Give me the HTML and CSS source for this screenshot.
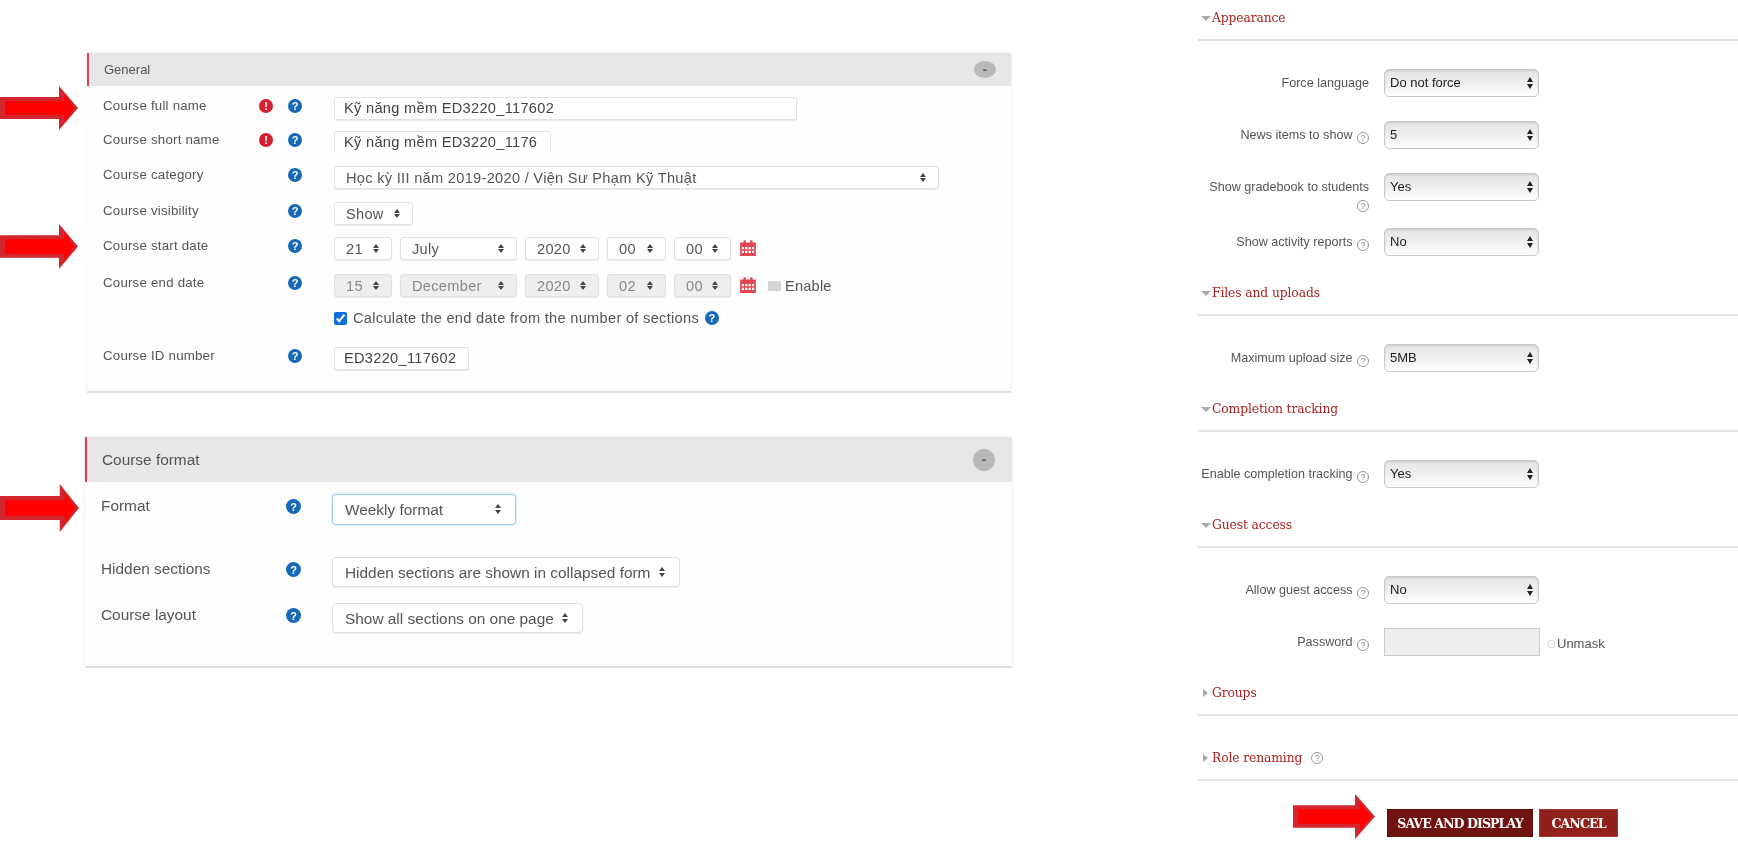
FILE: index.html
```html
<!DOCTYPE html>
<html lang="en">
<head>
<meta charset="utf-8">
<title>Course settings</title>
<link rel="stylesheet" href="styles.css">
</head>
<body>
<svg class="defs" width="0" height="0" aria-hidden="true">
  <symbol id="arrow" viewBox="0 0 78 44" preserveAspectRatio="none">
    <polygon fill="#d2262e" points="0,11 59,11 59,0 78,22 59,44 59,33 0,33"/>
    <polygon fill="#ff0000" points="5,15 64,15 64,8 74,22 64,36 64,29 5,29"/>
  </symbol>
  <symbol id="cal" viewBox="0 0 16 16">
    <path fill="#e2474f" d="M1 3h3V1h2v2h4V1h2v2h3v12H1z"/>
    <path fill="#fff" d="M2.5 7h2v2h-2zM5.500 7h2v2h-2zM8.500 7h2v2h-2zM11.500 7h2v2h-2zM2.500 10.500h2v2h-2zM5.500 10.500h2v2h-2zM8.500 10.500h2v2h-2zM11.500 10.500h2v2h-2z"/>
  </symbol>
</svg>
<main class="page">
  <section class="left">
    <svg class="arrow arrow-a"><use href="#arrow"/></svg>
    <svg class="arrow arrow-b"><use href="#arrow"/></svg>
    <svg class="arrow arrow-c"><use href="#arrow"/></svg>

    <div class="panel panel-general">
      <header class="panel-head"><span>General</span><b class="pill">-</b></header>
      <div class="grid-general">
        <label class="lab">Course full name</label><i class="alert">!</i><i class="help">?</i>
        <div class="ctl"><input class="inp w-fullname" value="Kỹ năng mềm ED3220_117602"></div>

        <label class="lab">Course short name</label><i class="alert">!</i><i class="help">?</i>
        <div class="ctl"><input class="inp w-short open-bottom" value="Kỹ năng mềm ED3220_1176"></div>

        <label class="lab">Course category</label><span></span><i class="help">?</i>
        <div class="ctl"><div class="psel w-cat"><select><option>Học kỳ III năm 2019-2020 / Viện Sư Phạm Kỹ Thuật</option></select></div></div>

        <label class="lab">Course visibility</label><span></span><i class="help">?</i>
        <div class="ctl"><div class="psel w-show"><select><option>Show</option></select></div></div>

        <label class="lab">Course start date</label><span></span><i class="help">?</i>
        <div class="ctl dates">
          <div class="psel w-d"><select><option>21</option></select></div>
          <div class="psel w-m"><select><option>July</option></select></div>
          <div class="psel w-y"><select><option>2020</option></select></div>
          <div class="psel w-h"><select><option>00</option></select></div>
          <div class="psel w-n"><select><option>00</option></select></div>
          <svg class="cal"><use href="#cal"/></svg>
        </div>

        <label class="lab">Course end date</label><span></span><i class="help">?</i>
        <div class="ctl dates">
          <div class="psel w-d off"><select disabled><option>15</option></select></div>
          <div class="psel w-m off"><select disabled><option>December</option></select></div>
          <div class="psel w-y off"><select disabled><option>2020</option></select></div>
          <div class="psel w-h off"><select disabled><option>02</option></select></div>
          <div class="psel w-n off"><select disabled><option>00</option></select></div>
          <svg class="cal"><use href="#cal"/></svg>
          <span class="enable"><span class="fakecheck"></span>Enable</span>
        </div>

        <span></span><span></span><span></span>
        <div class="ctl calc"><input type="checkbox" class="chk" checked><span>Calculate the end date from the number of sections</span><i class="help">?</i></div>

        <label class="lab">Course ID number</label><span></span><i class="help">?</i>
        <div class="ctl"><input class="inp w-id" value="ED3220_117602"></div>
      </div>
    </div>

    <div class="panel panel-format">
      <header class="panel-head"><span>Course format</span><b class="pill">-</b></header>
      <div class="grid-format">
        <label class="lab">Format</label><i class="help">?</i>
        <div class="psel w-week focus"><select><option>Weekly format</option></select></div>
        <label class="lab">Hidden sections</label><i class="help">?</i>
        <div class="psel w-hidden"><select><option>Hidden sections are shown in collapsed form</option></select></div>
        <label class="lab">Course layout</label><i class="help">?</i>
        <div class="psel w-layout"><select><option>Show all sections on one page</option></select></div>
      </div>
    </div>
  </section>

  <section class="right">
    <div class="sec">
      <h3 class="sec-head"><span class="tri-down"></span>Appearance</h3>
      <div class="sec-body">
        <div class="row"><label class="rl">Force language</label><div class="msel"><select><option>Do not force</option></select></div></div>
        <div class="row"><label class="rl">News items to show <i class="qm">?</i></label><div class="msel"><select><option>5</option></select></div></div>
        <div class="row row-tall"><label class="rl">Show gradebook to students <i class="qm">?</i></label><div class="msel"><select><option>Yes</option></select></div></div>
        <div class="row"><label class="rl">Show activity reports <i class="qm">?</i></label><div class="msel"><select><option>No</option></select></div></div>
      </div>
    </div>
    <div class="sec">
      <h3 class="sec-head"><span class="tri-down"></span>Files and uploads</h3>
      <div class="sec-body">
        <div class="row"><label class="rl">Maximum upload size <i class="qm">?</i></label><div class="msel"><select><option>5MB</option></select></div></div>
      </div>
    </div>
    <div class="sec">
      <h3 class="sec-head"><span class="tri-down"></span>Completion tracking</h3>
      <div class="sec-body">
        <div class="row"><label class="rl">Enable completion tracking <i class="qm">?</i></label><div class="msel"><select><option>Yes</option></select></div></div>
      </div>
    </div>
    <div class="sec">
      <h3 class="sec-head"><span class="tri-down"></span>Guest access</h3>
      <div class="sec-body">
        <div class="row"><label class="rl">Allow guest access <i class="qm">?</i></label><div class="msel"><select><option>No</option></select></div></div>
        <div class="row"><label class="rl">Password <i class="qm">?</i></label><input class="pass" disabled><span class="unmask"><span class="mini"></span>Unmask</span></div>
      </div>
    </div>
    <div class="sec sec-closed">
      <h3 class="sec-head"><span class="tri-right"></span>Groups</h3>
    </div>
    <div class="sec sec-closed">
      <h3 class="sec-head"><span class="tri-right"></span>Role renaming <i class="qm qm-head">?</i></h3>
    </div>
    <div class="actions">
      <svg class="arrow arrow-d"><use href="#arrow"/></svg>
      <button class="btn btn-save">SAVE AND DISPLAY</button>
      <button class="btn btn-cancel">CANCEL</button>
    </div>
  </section>
</main>
</body>
</html>
```

FILE: styles.css
```css
* { box-sizing: border-box; }
html, body { margin: 0; padding: 0; background: #fff; }
body { width: 1738px; height: 848px; overflow: hidden; font-family: "Liberation Sans", Arial, sans-serif; }
.defs { position: absolute; }
i { font-style: normal; }

.page { display: flex; width: 1738px; height: 848px; }
.left { position: relative; width: 1198px; flex: none; padding: 53px 0 0 87px; }
.right { width: 540px; flex: none; filter: blur(.3px); }

.arrow { position: absolute; display: block; z-index: 2; }
.arrow-a { left: 0; top: 86px; width: 78px; height: 44px; filter: blur(.4px); }
.arrow-b { left: 0; top: 224px; width: 78px; height: 45px; filter: blur(.4px); }
.arrow-c { left: 0; top: 484px; width: 79px; height: 48px; filter: blur(.4px); }
.arrow-d { left: 95px; top: -15px; width: 82px; height: 45px; }

/* panels */
.panel { background: #fefefe; box-shadow: 0 0 2px rgba(0,0,0,.1), 0 2px 1px #e4e4e4; }
.panel-general { width: 924px; height: 338px; filter: blur(.7px); }
.panel-format { width: 927px; height: 229px; margin: 46px 0 0 -2px; filter: blur(.55px); }
.panel-head { display: flex; align-items: center; justify-content: space-between; background: #e7e7e7; border-left: 2px solid #e0404c; color: #555; }
.panel-general .panel-head { height: 33px; padding: 0 15px 0 15px; font-size: 13px; }
.panel-format .panel-head { height: 45px; padding: 0 17px 0 15px; font-size: 15.400px; color: #555; }
.pill { display: flex; align-items: center; justify-content: center; background: #b9b9b9; color: #555; font-size: 13px; }
.panel-general .pill { width: 22px; height: 17px; border-radius: 50%; }
.panel-format .pill { width: 22px; height: 22px; border-radius: 50%; }

.grid-general {
  display: grid;
  grid-template-columns: 156px 29px 46px 1fr;
  grid-template-rows: 34px 35px 36px 35px 37px 38px 35px 23px;
  padding: 11px 0 0 16px;
}
.grid-format {
  display: grid;
  grid-template-columns: 185px 46px 1fr;
  grid-template-rows: 63px 46px 31px;
  padding: 12px 0 0 16px;
}
.lab { color: #555; font-size: 13.3px; line-height: 18px; letter-spacing: .2px; }
.panel-format .lab { font-size: 15.400px; line-height: 24px; color: #555; letter-spacing: 0; }
.help, .alert {
  display: flex; align-items: center; justify-content: center;
  width: 14px; height: 14px; margin-top: 2px; border-radius: 50%;
  color: #fff; font-weight: bold; font-size: 11px; line-height: 14px;
}
.help { background: #1769b8; }
.alert { background: #d81f2e; }
.panel-format .help { margin-top: 5px; width: 15px; height: 15px; }

.ctl { display: flex; align-items: flex-start; }
.inp {
  height: 23px; padding: 0 9px 1px; border: 1px solid #e2e2e2; border-radius: 2px;
  background: #fff; color: #444; font: 14.600px/20px "Liberation Sans", Arial, sans-serif; letter-spacing: .3px;
  box-shadow: 0 1px 1px rgba(0,0,0,.08);
}
.open-bottom { border-bottom-color: transparent; box-shadow: none; }
.w-fullname { width: 463px; }
.w-short { width: 217px; }
.w-id { width: 135px; }

.psel { position: relative; height: 23px; }
.psel select {
  appearance: none; -webkit-appearance: none; display: block; width: 100%; height: 100%;
  padding: 0 0 0 11px; margin: 0; border: 1px solid #e2e2e2; border-radius: 3px;
  background: #fff; color: #555; font: 14.600px "Liberation Sans", Arial, sans-serif; letter-spacing: .3px;
  box-shadow: 0 1px 1px rgba(0,0,0,.08); opacity: 1;
}
.psel::before, .psel::after {
  content: ""; position: absolute; right: 13px; width: 0; height: 0; z-index: 1;
  border-left: 3.5px solid transparent; border-right: 3.5px solid transparent;
}
.psel::before { top: 7px; border-bottom: 4px solid #444; }
.psel::after { top: 12px; border-top: 4px solid #444; }
.psel.off select { background: #eceeef; color: #888; opacity: 1; }
.w-cat { width: 605px; }
.w-show { width: 79px; }
.w-d { width: 58px; }
.w-m { width: 117px; }
.w-y { width: 74px; }
.w-h { width: 59px; }
.w-n { width: 57px; }
.dates { gap: 8px; }
.dates .cal { width: 18px; height: 18px; margin: 2px 0 0 0; flex: none; }
.enable { display: flex; align-items: center; height: 23px; margin-left: 3px; color: #555; font-size: 14.600px; letter-spacing: .2px; }
.fakecheck { width: 13px; height: 10px; margin-right: 4px; background: #d4d4d4; }
.calc { gap: 6px; align-items: center; height: 14px; margin-top: -1px; color: #555; font-size: 14.600px; letter-spacing: .3px; }
.calc .help { margin: 0; }
.chk { width: 13px; height: 13px; margin: 0; accent-color: #0a6fd8; }

.panel-format .psel { height: 30px; }
.panel-format .psel select { padding-left: 12px; font-size: 15.400px; color: #555; letter-spacing: 0; border-color: #e0e0e0; border-radius: 4px; }
.panel-format .psel::before { top: 10px; right: 15px; }
.panel-format .psel::after { top: 16px; right: 15px; }
.w-week { width: 184px; }
.w-week select { height: 31px; border: 1px solid #9cc8f2 !important; box-shadow: 0 0 3px rgba(80,160,240,.45); }
.w-hidden { width: 348px; }
.w-layout { width: 251px; }

/* right column */
.sec { padding-bottom: 19px; }
.sec-head {
  display: flex; align-items: center; height: 41px; margin: 0; padding: 0 0 3px 2px;
  border-bottom: 2px solid #e4e4e4; color: #aa2222;
  font: normal 12.3px/18px "DejaVu Serif", "Liberation Serif", serif; letter-spacing: -.1px;
}
.sec-closed { padding-bottom: 24px; }
.sec-closed + .sec-closed { padding-bottom: 28px; }
.tri-down { width: 0; height: 0; margin: 0 1px 0 1px; border-left: 5px solid transparent; border-right: 5px solid transparent; border-top: 5px solid #aaa; }
.tri-right { width: 0; height: 0; margin: 0 4px 0 3px; border-top: 4.500px solid transparent; border-bottom: 4.500px solid transparent; border-left: 5px solid #aaa; }
.sec-body { display: flex; flex-direction: column; padding-top: 28px; }
.row { display: flex; align-items: flex-start; height: 52px; }
.row:last-child { height: 28px; }
.row-tall { height: 55px; }
.rl { width: 171px; margin-right: 15px; padding-top: 6px; text-align: right; color: #555; font-size: 12.6px; line-height: 16px; }
.qm {
  display: inline-flex; align-items: center; justify-content: center; width: 12px; height: 12px;
  margin-left: 1px; border: 1px solid #999; border-radius: 50%; color: #888; font-size: 8.5px; line-height: 10px; vertical-align: -2px;
}
.qm-head { width: 12px; height: 12px; margin-left: 9px; font-family: "Liberation Sans", Arial, sans-serif; }
.msel { position: relative; width: 155px; height: 28px; }
.msel select {
  appearance: none; -webkit-appearance: none; display: block; width: 100%; height: 100%; margin: 0; padding: 0 0 2px 5px;
  border: 1.500px solid #c9c9c9; border-radius: 5px; color: #222; font: 13px "Liberation Sans", Arial, sans-serif;
  background: linear-gradient(#e4e4e4, #f0f0f0 55%, #fff); box-shadow: inset 0 1px 2px rgba(0,0,0,.12);
}
.msel::before, .msel::after {
  content: ""; position: absolute; right: 6px; width: 0; height: 0;
  border-left: 3px solid transparent; border-right: 3px solid transparent;
}
.msel::before { top: 8px; border-bottom: 5px solid #222; }
.msel::after { top: 15px; border-top: 5px solid #222; }
.pass { width: 156px; height: 28px; border: 1.500px solid #ccc; background: #eee; }
.unmask { display: flex; align-items: center; margin: 7px 0 0 8px; color: #555; font-size: 13px; line-height: 18px; }
.mini { width: 7px; height: 8px; margin: 0 2px 0 0; border: 1px solid #ddd; border-radius: 2px; }
.actions { position: relative; display: flex; gap: 6px; padding-left: 189px; }
.btn { height: 28px; padding: 0; border: 1px solid #5d100c; color: #fff; font: bold 12.6px "DejaVu Serif", "Liberation Serif", serif; letter-spacing: -.95px; white-space: nowrap; }
.btn-save { width: 146px; background: #6e130f; }
.btn-cancel { width: 79px; background: #8f201b; border-color: #a33; }
```
